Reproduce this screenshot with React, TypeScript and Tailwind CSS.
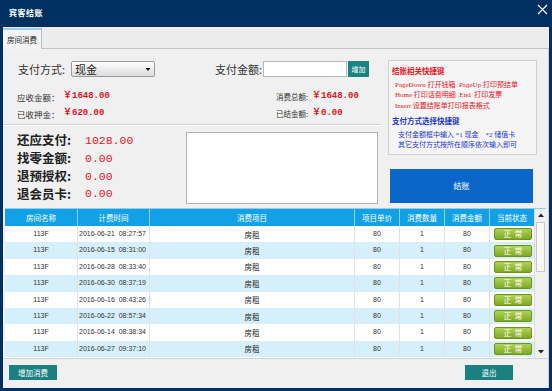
import React from "react";

const rows = [
  "2016-06-21  08:27:57",
  "2016-06-15  08:31:00",
  "2016-06-28  08:33:40",
  "2016-06-30  08:37:19",
  "2016-06-16  08:43:26",
  "2016-06-22  08:57:34",
  "2016-06-14  08:38:34",
  "2016-06-27  09:37:10",
];

const cols = ["w-[73px]", "w-[72px]", "w-[205px]", "w-[45px]", "w-[45px]", "w-[45px]", "w-[44px]"];
const headers = ["房间名称", "计费时间", "消费项目", "项目单价", "消费数量", "消费金额", "当前状态"];

function Badge() {
  return (
    <div className="w-[38px] h-[12px] rounded-[2px] border border-[#6f9419] bg-gradient-to-b from-[#b2d352] to-[#7ea825] flex items-center justify-center text-white text-[8px] leading-none tracking-[3px] pl-[3px]">
      正常
    </div>
  );
}

export default function App() {
  return (
    <div className="w-[552px] h-[391px] bg-[#00305f] flex flex-col font-['Noto_Sans_CJK_SC',sans-serif] overflow-hidden">
      {/* title bar */}
      <div className="h-[27px] flex items-center justify-between pl-[9px] pr-[4px] shrink-0">
        <span className="text-white text-[8px] font-bold tracking-[0.5px] -mt-[2px]">宾客结账</span>
        <svg width="11" height="11" viewBox="0 0 11 11" className="-mt-[8px]">
          <path d="M1 1 L10 10 M10 1 L1 10" stroke="#ffffff" strokeWidth="1.1" />
        </svg>
      </div>
      {/* content */}
      <div className="ml-[3px] mr-[3px] mb-[3px] flex-1 bg-[#f0f0f0] flex flex-col">
        {/* tab strip */}
        <div className="h-[22px] flex items-end border-b border-[#c4c4c4] bg-[#ececec] shrink-0">
          <div className="h-[21px] w-[39px] bg-[#f4f4f4] border-t-2 border-[#9ccfee] border-r border-r-[#bdbdbd] flex items-center justify-center text-[7.5px] text-[#222] -mb-px">
            房间消费
          </div>
        </div>
        {/* panel */}
        <div className="flex-1 flex flex-col border-r border-[#d0d0d0]">
          {/* top section */}
          <div className="h-[159px] flex shrink-0">
            {/* left column */}
            <div className="w-[377px] flex flex-col">
              <div className="mt-[12px] h-[16px] flex items-center pl-[15px]">
                <span className="w-[53px] text-[11px] text-[#333]">支付方式:</span>
                <div className="w-[84px] h-[16px] border border-[#9a9a9a] rounded-[2px] bg-gradient-to-b from-[#ffffff] to-[#dcdcdc] flex items-center justify-between pl-[3px] pr-[3px]">
                  <span className="text-[11px] text-[#222] leading-none">现金</span>
                  <svg width="6" height="6" viewBox="0 0 6 6">
                    <path d="M0.5 2 L5.5 2 L3 5 Z" fill="#111" />
                  </svg>
                </div>
                <span className="ml-[60px] w-[48px] text-[11px] text-[#333]">支付金额:</span>
                <div className="w-[84px] h-[16px] bg-white border border-[#b8b8b8]" />
                <div className="ml-px w-[21px] h-[16px] bg-[#1a8383] text-white text-[7px] flex items-center justify-center">增加</div>
              </div>
              <div className="mt-[13px] h-[14px] flex items-center pl-[14px] text-[8.5px] whitespace-nowrap">
                <span className="w-[46px] text-[#333]">应收金额：</span>
                <span className="w-[213px] text-[#e0141e] font-bold font-['Liberation_Mono','Noto_Sans_CJK_SC',monospace] text-[9px]">￥1648.00</span>
                <span className="w-[36px] text-[#333] text-[7.5px]">消费总额:</span>
                <span className="text-[#e0141e] font-bold font-['Liberation_Mono','Noto_Sans_CJK_SC',monospace] text-[9px]">￥1648.00</span>
              </div>
              <div className="mt-[3px] h-[14px] flex items-center pl-[14px] text-[8.5px] whitespace-nowrap">
                <span className="w-[46px] text-[#333]">已收押金：</span>
                <span className="w-[213px] text-[#e0141e] font-bold font-['Liberation_Mono','Noto_Sans_CJK_SC',monospace] text-[9px]">￥620.00</span>
                <span className="w-[36px] text-[#333] text-[7.5px]">已结金额:</span>
                <span className="text-[#e0141e] font-bold font-['Liberation_Mono','Noto_Sans_CJK_SC',monospace] text-[9px]">￥0.00</span>
              </div>
              <div className="mt-[3px] h-px bg-[#cfcfcf]" />
              <div className="h-px bg-white" />
              <div className="flex">
                <div className="pl-[14px] pt-[6px] flex flex-col">
                  {[
                    ["还应支付:", "1028.00"],
                    ["找零金额:", "0.00"],
                    ["退预授权:", "0.00"],
                    ["退会员卡:", "0.00"],
                  ].map(([l, v]) => (
                    <div key={l} className="h-[17.7px] flex items-center">
                      <span className="w-[68px] text-[12.5px] font-bold text-[#222]">{l}</span>
                      <span className="text-[11.5px] text-[#e0141e] font-['Liberation_Mono',monospace]">{v}</span>
                    </div>
                  ))}
                </div>
                <div className="ml-auto mt-[6px] mr-[2px] w-[192px] h-[72px] bg-white border border-[#b4b4b4]" />
              </div>
            </div>
            {/* right column */}
            <div className="flex-1 flex flex-col">
              <div className="ml-[8px] mt-[11px] w-[149px] h-[95px] border border-[#cfcfcf] bg-[#f5f5f5] pl-[3px] pt-[5px] text-[7px] leading-[10.7px] font-['Liberation_Serif','Noto_Sans_CJK_SC',serif]">
                <div className="text-[#e8141b] font-bold text-[7.5px] font-['Noto_Sans_CJK_SC',sans-serif]">结账相关快捷键</div>
                <div className="text-[#e8141b] pl-[3px] mt-[3px] whitespace-pre">PageDown 打开钱箱  PageUp 打印预结单</div>
                <div className="text-[#e8141b] pl-[3px] whitespace-pre">Home 打印话费明细  End  打印发票</div>
                <div className="text-[#e8141b] pl-[3px] whitespace-pre">Insert 设置结账单打印报表格式</div>
                <div className="text-[#1f37c8] font-bold text-[7.5px] mt-[4px] font-['Noto_Sans_CJK_SC',sans-serif]">支付方式选择快捷键</div>
                <div className="text-[#1f37c8] pl-[6px] mt-[3px] whitespace-pre">支付金额框中输入 *1 现金    *2 储值卡</div>
                <div className="text-[#1f37c8] pl-[6px] whitespace-pre">其它支付方式按所在顺序依次输入即可</div>
              </div>
              <div className="ml-[10px] mt-[14px] w-[143px] h-[34px] bg-[#0a67c9] text-white text-[8px] flex items-center justify-center">结账</div>
            </div>
          </div>
          {/* table */}
          <div className="ml-[2px] mr-[2px] h-[150px] border-t border-[#8fd0ef] flex overflow-hidden shrink-0 bg-white">
            <div className="flex flex-col w-[529px]">
              <div className="h-[17px] bg-[#12a1e6] flex shrink-0">
                {headers.map((h, i) => (
                  <div key={h} className={`${cols[i]} ${i < 6 ? "border-r border-[#8fd3f5]" : ""} flex items-center justify-center text-white text-[7.5px]`}>
                    {h}
                  </div>
                ))}
              </div>
              {rows.map((t, r) => (
                <div key={t} className={`h-[16.4px] flex shrink-0 text-[7px] text-[#333] ${r % 2 === 1 ? "bg-[#d5f0fb]" : "bg-white"}`}>
                  <div className="w-[73px] border-r border-[#e2e2e2] flex items-center justify-center font-['Liberation_Sans',sans-serif]">113F</div>
                  <div className="w-[72px] border-r border-[#e2e2e2] flex items-center pl-[1px] whitespace-pre font-['Liberation_Sans',sans-serif]">{t}</div>
                  <div className="w-[205px] border-r border-[#e2e2e2] flex items-center justify-center text-[7.5px] text-[#222]">房租</div>
                  <div className="w-[45px] border-r border-[#e2e2e2] flex items-center justify-center font-['Liberation_Sans',sans-serif]">80</div>
                  <div className="w-[45px] border-r border-[#e2e2e2] flex items-center justify-center font-['Liberation_Sans',sans-serif]">1</div>
                  <div className="w-[45px] border-r border-[#e2e2e2] flex items-center justify-center font-['Liberation_Sans',sans-serif]">80</div>
                  <div className="w-[44px] flex items-center justify-center pl-[2px]">
                    <Badge />
                  </div>
                </div>
              ))}
            </div>
            {/* scrollbar */}
            <div className="w-[12px] bg-[#f0f0f0] border-l border-[#dcdcdc] flex flex-col items-center">
              <div className="h-[11px] w-full flex items-center justify-center">
                <svg width="6" height="4" viewBox="0 0 6 4"><path d="M0 4 L3 0.5 L6 4 Z" fill="#222" /></svg>
              </div>
              <div className="mt-[2px] w-[9px] h-[50px] bg-[#f8f8f8] border border-[#c8c8c8]" />
              <div className="flex-1" />
              <div className="h-[11px] w-full flex items-center justify-center mb-[1px]">
                <svg width="6" height="4" viewBox="0 0 6 4"><path d="M0 0 L3 3.5 L6 0 Z" fill="#222" /></svg>
              </div>
            </div>
          </div>
          {/* bottom bar */}
          <div className="flex-1 border-t border-[#d4d4d4] flex items-start justify-between pt-[6px] pl-[6px] pr-[35px]">
            <div className="w-[48px] h-[15px] bg-[#1a8080] text-white text-[7.5px] flex items-center justify-center">增加消费</div>
            <div className="w-[48px] h-[15px] bg-[#1a8080] text-white text-[7.5px] flex items-center justify-center">退出</div>
          </div>
        </div>
      </div>
    </div>
  );
}
